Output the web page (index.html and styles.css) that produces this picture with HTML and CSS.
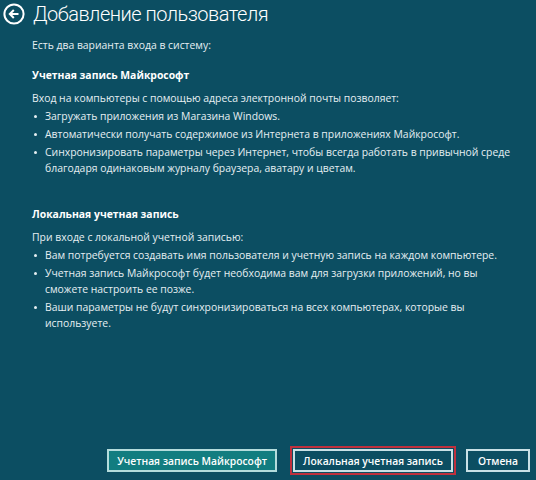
FILE: index.html
```html
<!DOCTYPE html>
<html lang="ru">
<head>
    <meta charset="UTF-8">
    <meta name="viewport" content="width=device-width, initial-scale=1.0">
    <title>Добавление пользователя</title>
    <link rel="stylesheet" href="styles.css">
</head>
<body>
    <div class="page">
        <header class="title-row">
            <button class="back-btn" aria-label="Назад">
                <svg width="22" height="22" viewBox="0 0 22 22">
                    <circle cx="11" cy="11" r="9.6" fill="none" stroke="#fff" stroke-width="2"/>
                    <path d="M15.5 11H7M10.8 7L6.8 11L10.8 15" fill="none" stroke="#fff" stroke-width="2"/>
                </svg>
            </button>
            <h1>Добавление пользователя</h1>
        </header>

        <div class="content">
            <p class="lead">Есть два варианта входа в систему:</p>

            <section class="option">
                <h2>Учетная запись Майкрософт</h2>
                <p>Вход на компьютеры с помощью адреса электронной почты позволяет:</p>
                <ul>
                    <li>Загружать приложения из Магазина Windows.</li>
                    <li>Автоматически получать содержимое из Интернета в приложениях Майкрософт.</li>
                    <li>Синхронизировать параметры через Интернет, чтобы всегда работать в привычной среде благодаря одинаковым журналу браузера, аватару и цветам.</li>
                </ul>
            </section>

            <section class="option">
                <h2>Локальная учетная запись</h2>
                <p>При входе с локальной учетной записью:</p>
                <ul>
                    <li>Вам потребуется создавать имя пользователя и учетную запись на каждом компьютере.</li>
                    <li>Учетная запись Майкрософт будет необходима вам для загрузки приложений, но вы сможете настроить ее позже.</li>
                    <li>Ваши параметры не будут синхронизироваться на всех компьютерах, которые вы используете.</li>
                </ul>
            </section>
        </div>

        <footer class="actions">
            <button class="btn btn-primary">Учетная запись Майкрософт</button>
            <button class="btn btn-focused">Локальная учетная запись</button>
            <button class="btn">Отмена</button>
        </footer>
    </div>
</body>
</html>
```

FILE: styles.css
```css
html, body {
    margin: 0;
    padding: 0;
    height: 100%;
}
body {
    font-family: "Open Sans", "Noto Sans", "DejaVu Sans", sans-serif;
    background-color: #0c4e62;
    color: #e6eff2;
    font-size: 10.4px;
    line-height: 16px;
}
.page {
    height: 480px;
    display: flex;
    flex-direction: column;
}
.title-row {
    display: flex;
    align-items: center;
    gap: 8px;
    padding: 3px 0 0 3px;
    height: 22px;
}
.back-btn {
    background: none;
    border: none;
    padding: 0;
    width: 22px;
    height: 22px;
    display: flex;
}
h1 {
    margin: 0;
    font-family: Roboto, "Open Sans", sans-serif;
    font-weight: 300;
    font-size: 20px;
    line-height: 22px;
    letter-spacing: -0.5px;
    color: #fff;
}
.content {
    padding-left: 32px;
    padding-right: 20px;
}
.lead {
    margin: 12px 0 0;
}
.option {
    margin-top: 14px;
}
.option + .option {
    margin-top: 30px;
}
h2 {
    margin: 0;
    font-size: 10.4px;
    font-weight: 700;
    line-height: 16px;
    color: #fff;
}
.option p {
    margin: 7px 0 0;
}
ul {
    margin: 0;
    padding: 0;
    list-style: none;
}
li {
    position: relative;
    margin-top: 2px;
    padding-left: 13px;
}
li::before {
    content: "";
    position: absolute;
    left: 2px;
    top: 7px;
    width: 3px;
    height: 3px;
    background: #e6eff2;
    border-radius: 50%;
}
.actions {
    margin-top: auto;
    display: flex;
    justify-content: flex-end;
    gap: 13px;
    padding: 0 6px 8px 0;
}
.btn {
    font-family: inherit;
    font-size: 10.3px;
    font-weight: 600;
    color: #fff;
    background: transparent;
    border: 2px solid #c9e1e6;
    height: 23px;
    padding: 0 10px;
}
.btn-primary {
    background-color: #127d80;
    border-color: #b4dcdc;
    padding: 0 8px;
    margin-right: 3px;
}
.btn-focused {
    outline: 2px solid #c0303d;
    outline-offset: 1px;
    padding: 0 8px;
}
```
